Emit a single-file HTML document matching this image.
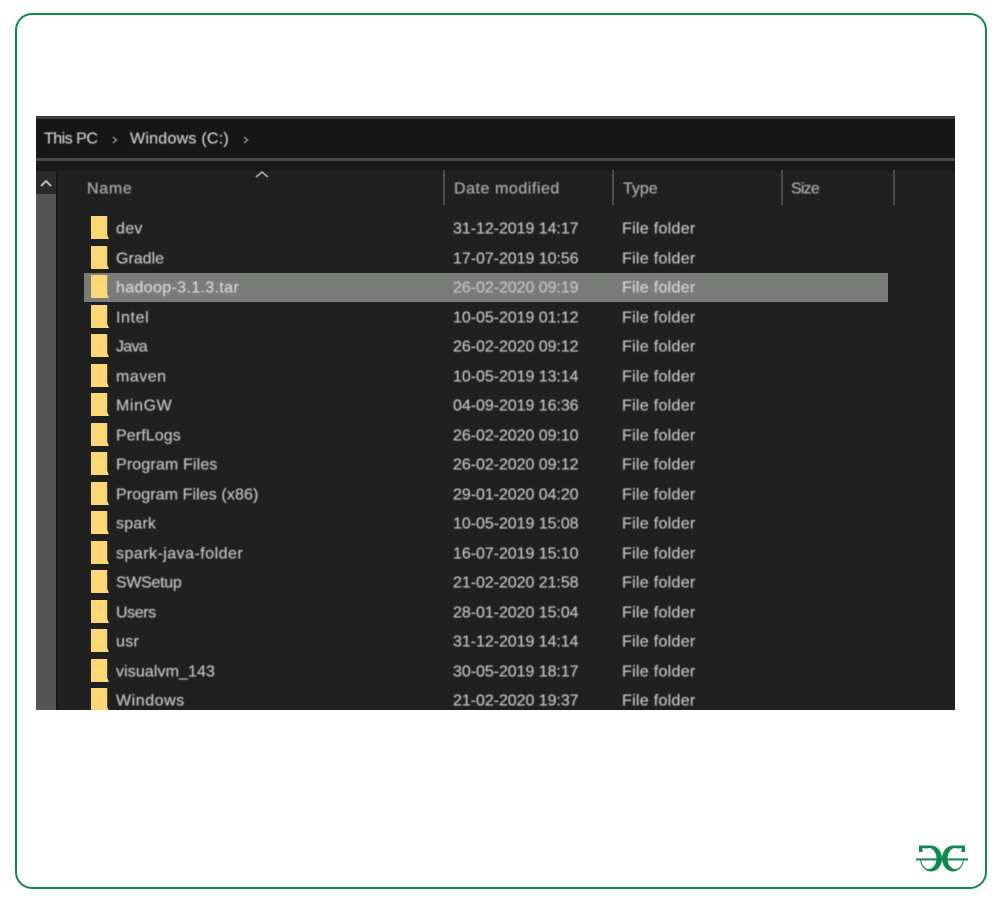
<!DOCTYPE html>
<html><head><meta charset="utf-8">
<style>
html,body{margin:0;padding:0;background:#fff}
body{width:998px;height:904px;position:relative;overflow:hidden;font-family:"Liberation Sans",sans-serif}
#frame{position:absolute;left:15px;top:13px;width:968px;height:872px;border:2px solid #0f8a4e;border-radius:17px}
#shot{position:absolute;left:36px;top:116px;width:919px;height:594px;background:#202020;overflow:hidden}
#shot div{position:absolute}
.t{font-size:16px;line-height:20px;white-space:nowrap;color:#bdbdbd;filter:blur(.45px);text-shadow:0 0 .7px #bdbdbd;transform:translateY(1.5px)}
.d{left:417px;letter-spacing:-.05px}
.y{left:586px;letter-spacing:.3px}
.n{left:80px}
.h{color:#a8a8a8;text-shadow:0 0 .7px #a8a8a8}
.sep{width:2px;top:54px;height:35px;background:#4c4c4c}
.f{left:55px;width:18px;height:23px;background:#fbd775;clip-path:polygon(0 0,90% 0,90% 82%,100% 100%,0 100%);filter:blur(.35px)}
</style></head><body>
<div id="frame"></div>
<div id="shot">
<div style="left:0;top:0;width:919px;height:3px;background:#3a3a3a"></div>
<div style="left:0;top:3px;width:919px;height:39px;background:#161616"></div>
<div style="left:0;top:42px;width:919px;height:3px;background:#4a4a4a"></div>
<div style="left:0;top:45px;width:919px;height:10px;background:#191919"></div>
<div style="left:0;top:55px;width:20px;height:539px;background:#2a2a2a"></div>
<div style="left:0;top:78px;width:20px;height:516px;background:#555"></div>
<div style="left:20px;top:55px;width:2px;height:539px;background:#181818"></div>

<div class="t" style="left:8px;top:12px;color:#c8c8c8;letter-spacing:-.5px">This PC</div>
<svg style="position:absolute;left:74px;top:19px" width="10" height="10"><path d="M3 2L6.500 5L3 8" fill="none" stroke="#777" stroke-width="1.800"/></svg>
<div class="t" style="left:94px;top:12px;color:#c8c8c8;letter-spacing:.25px">Windows (C:)</div>
<svg style="position:absolute;left:205px;top:19px" width="10" height="10"><path d="M3 2L6.500 5L3 8" fill="none" stroke="#777" stroke-width="1.800"/></svg>

<svg style="position:absolute;left:3px;top:62px" width="14" height="10"><path d="M2 8L7 3L12 8" fill="none" stroke="#bbb" stroke-width="2"/></svg>
<svg style="position:absolute;left:218px;top:53px" width="16" height="10"><path d="M2 8L8 3L14 8" fill="none" stroke="#999" stroke-width="2"/></svg>

<div class="t h" style="left:51px;top:62px;letter-spacing:.7px">Name</div>
<div class="sep" style="left:407px"></div>
<div class="t h" style="left:418px;top:62px;letter-spacing:.55px">Date modified</div>
<div class="sep" style="left:576px"></div>
<div class="t h" style="left:587px;top:62px">Type</div>
<div class="sep" style="left:745px"></div>
<div class="t h" style="left:755px;top:62px;letter-spacing:-.8px">Size</div>
<div class="sep" style="left:857px"></div>

<div style="left:48px;top:157px;width:804px;height:29px;background:#7a7c7a"></div>

<div class="f" style="top:100px"></div><div class="t n" style="top:102px;letter-spacing:.3px">dev</div><div class="t d" style="top:102px">31-12-2019 14:17</div><div class="t y" style="top:102px">File folder</div>
<div class="f" style="top:130px"></div><div class="t n" style="top:132px">Gradle</div><div class="t d" style="top:132px">17-07-2019 10:56</div><div class="t y" style="top:132px">File folder</div>
<div class="f" style="top:159px"></div><div class="t n" style="top:161px;color:#d6d6d6;letter-spacing:.35px">hadoop-3.1.3.tar</div><div class="t d" style="top:161px;color:#c0c0c0">26-02-2020 09:19</div><div class="t y" style="top:161px;color:#d6d6d6">File folder</div>
<div class="f" style="top:189px"></div><div class="t n" style="top:191px;letter-spacing:.6px">Intel</div><div class="t d" style="top:191px">10-05-2019 01:12</div><div class="t y" style="top:191px">File folder</div>
<div class="f" style="top:218px"></div><div class="t n" style="top:220px;letter-spacing:-.7px">Java</div><div class="t d" style="top:220px">26-02-2020 09:12</div><div class="t y" style="top:220px">File folder</div>
<div class="f" style="top:248px"></div><div class="t n" style="top:250px;letter-spacing:.5px">maven</div><div class="t d" style="top:250px">10-05-2019 13:14</div><div class="t y" style="top:250px">File folder</div>
<div class="f" style="top:277px"></div><div class="t n" style="top:279px;letter-spacing:.6px">MinGW</div><div class="t d" style="top:279px">04-09-2019 16:36</div><div class="t y" style="top:279px">File folder</div>
<div class="f" style="top:307px"></div><div class="t n" style="top:309px;letter-spacing:.1px">PerfLogs</div><div class="t d" style="top:309px">26-02-2020 09:10</div><div class="t y" style="top:309px">File folder</div>
<div class="f" style="top:336px"></div><div class="t n" style="top:338px;letter-spacing:.15px">Program Files</div><div class="t d" style="top:338px">26-02-2020 09:12</div><div class="t y" style="top:338px">File folder</div>
<div class="f" style="top:366px"></div><div class="t n" style="top:368px;letter-spacing:.1px">Program Files (x86)</div><div class="t d" style="top:368px">29-01-2020 04:20</div><div class="t y" style="top:368px">File folder</div>
<div class="f" style="top:395px"></div><div class="t n" style="top:397px;letter-spacing:.2px">spark</div><div class="t d" style="top:397px">10-05-2019 15:08</div><div class="t y" style="top:397px">File folder</div>
<div class="f" style="top:425px"></div><div class="t n" style="top:427px;letter-spacing:.47px">spark-java-folder</div><div class="t d" style="top:427px">16-07-2019 15:10</div><div class="t y" style="top:427px">File folder</div>
<div class="f" style="top:454px"></div><div class="t n" style="top:456px;letter-spacing:-.3px">SWSetup</div><div class="t d" style="top:456px">21-02-2020 21:58</div><div class="t y" style="top:456px">File folder</div>
<div class="f" style="top:484px"></div><div class="t n" style="top:486px;letter-spacing:-.4px">Users</div><div class="t d" style="top:486px">28-01-2020 15:04</div><div class="t y" style="top:486px">File folder</div>
<div class="f" style="top:513px"></div><div class="t n" style="top:515px;letter-spacing:.3px">usr</div><div class="t d" style="top:515px">31-12-2019 14:14</div><div class="t y" style="top:515px">File folder</div>
<div class="f" style="top:543px"></div><div class="t n" style="top:545px;letter-spacing:.1px">visualvm_143</div><div class="t d" style="top:545px">30-05-2019 18:17</div><div class="t y" style="top:545px">File folder</div>
<div class="f" style="top:572px"></div><div class="t n" style="top:574px;letter-spacing:.55px">Windows</div><div class="t d" style="top:574px">21-02-2020 19:37</div><div class="t y" style="top:574px">File folder</div>
</div>

<svg style="position:absolute;left:914px;top:843px" width="56" height="32" viewBox="0 0 56 32">
<defs><g id="gl">
<path fill="#0f8a4e" fill-rule="evenodd" d="M6 15.500A11 13 0 1 1 28 15.500A11 13 0 1 1 6 15.500ZM7 15.500A7.750 10.500 0 1 0 22.500 15.500A7.750 10.500 0 1 0 7 15.500Z"/>
<rect x="0" y="5.500" width="12" height="10.500" fill="#fff"/>
<rect x="0" y="0" width="8" height="4.500" fill="#fff"/>
<path fill="#0f8a4e" d="M5 2.500H16V5H8.500V9H5Z"/>
</g></defs>
<use href="#gl"/>
<use href="#gl" transform="translate(56 0) scale(-1 1)"/>
<rect x="2" y="15.400" width="52" height="2" fill="#0f8a4e"/>
</svg>
</body></html>
